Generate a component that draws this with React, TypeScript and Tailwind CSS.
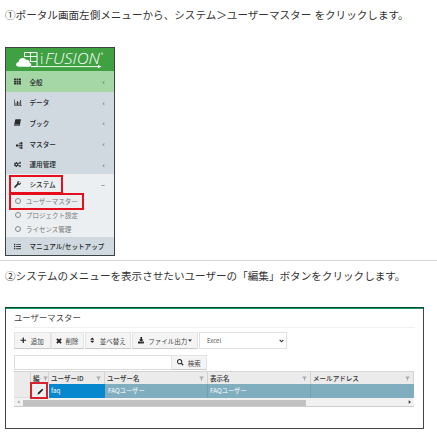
import type { ReactNode } from "react";
import {
  FaCogs,
  FaDownload,
  FaList,
  FaPlus,
  FaSearch,
  FaSort,
  FaTh,
  FaWrench,
} from "react-icons/fa";

function Logo() {
  return (
    <div className="relative h-[23px] shrink-0 bg-[#3fa142] text-white">
      <svg className="absolute inset-0" width="108" height="23" viewBox="0 0 108 23" fill="none">
        <path d="M18.5 9V4.5H31V18.5H25" stroke="white" strokeWidth="1" />
        <path d="M19 8.5H31M24.5 5V13M23.5 13.5H31" stroke="white" strokeWidth="0.9" />
        <path
          d="M13 18.8C9.2 18.8 9.4 14.5 12.6 14C12.8 9.8 18.4 8.6 20 12C22.6 11.2 23.8 13 23.4 14.8C26.1 15.3 25.8 18.8 23.4 18.8Z"
          fill="white"
        />
        <path d="M25 18.6H93" stroke="white" strokeWidth="0.9" />
        <path d="M92 16.9L95.6 18.6L92 20.3Z" fill="white" />
      </svg>
      <span className="absolute left-[34px] top-[2px] font-['Open_Sans',sans-serif] text-[15px] font-light leading-[17px]">i</span>
      <span className="absolute left-[39px] top-[2px] origin-left scale-x-[1.1] font-['Open_Sans',sans-serif] text-[15px] font-light italic leading-[17px]">
        FUSION
      </span>
      <span className="absolute left-[95px] top-[4px] text-[4px] leading-[5px]">®</span>
    </div>
  );
}

function ChartIcon() {
  return (
    <svg width="8" height="7" viewBox="0 0 8 7" fill="none" stroke="#333">
      <path d="M0.5 0.5V6.5H8" strokeWidth="0.6" />
      <path d="M2 3.5V6M3.5 2V6M5 3V6M6.6 1V6" strokeWidth="0.9" />
    </svg>
  );
}

function BookIcon() {
  return (
    <svg width="7" height="7" viewBox="0 0 7 7">
      <path d="M1.8 0.2H6.9L5.8 6.8H0.8C0.2 6.8 0 6.4 0.2 5.8L1.2 0.7Z" fill="#2b2b2b" />
      <path d="M1 5.8H5.3" stroke="#cfd8de" strokeWidth="0.5" />
    </svg>
  );
}

function TreeIcon() {
  return (
    <svg className="ml-[2px] mt-[3px]" width="7" height="7" viewBox="0 0 7 7">
      <path d="M1 3.5H5M3.2 1.2V5.9M3.2 1.2H5M3.2 5.9H5" stroke="#333" strokeWidth="0.6" fill="none" />
      <path d="M0 2.6H2V4.4H0ZM4.5 0.2H6.4V2H4.5ZM4.5 2.6H6.4V4.4H4.5ZM4.5 5H6.4V6.8H4.5Z" fill="#222" />
    </svg>
  );
}

function PencilIcon() {
  return (
    <svg width="7" height="7" viewBox="0 0 7 7">
      <path d="M0.5 6.5L1 4.8L5.2 0.7L6.3 1.8L2.2 6Z" fill="#111" />
    </svg>
  );
}

function CrossIcon() {
  return (
    <svg width="6" height="6" viewBox="0 0 6 6">
      <path d="M0.9 0.9L5.1 5.1M5.1 0.9L0.9 5.1" stroke="#222" strokeWidth="1.8" />
    </svg>
  );
}

function MenuRow({ icon, label, tone, mark = "‹" }: { icon: ReactNode; label: string; tone: string; mark?: string }) {
  return (
    <div className={`flex shrink-0 items-center pl-[8px] pr-[9px] ${tone}`}>
      <span className="flex w-[15.5px] shrink-0 text-[7px] text-[#333]">{icon}</span>
      <span className="grow whitespace-nowrap text-[6.6px] font-medium leading-[10px] text-[#202528]">{label}</span>
      <span className="text-[8px] leading-[9px] text-[#56636a]">{mark}</span>
    </div>
  );
}

function SubItem({ label }: { label: string }) {
  return (
    <div className="flex h-[14px] items-center pl-[9px]">
      <span className="mr-[5px] size-[6px] rounded-full border border-[#888]" />
      <span className="text-[6.5px] leading-[10px] text-[#777]">{label}</span>
    </div>
  );
}

function Sidebar() {
  return (
    <div className="relative ml-[5px] flex h-[209px] w-[110px] flex-col border border-[#3d4244] bg-[#d0d9df]">
      <Logo />
      <MenuRow icon={<FaTh />} label="全般" tone="h-[21px] bg-[#a5d6a5]" />
      <MenuRow icon={<ChartIcon />} label="データ" tone="h-[20px]" />
      <MenuRow icon={<BookIcon />} label="ブック" tone="h-[21px]" />
      <MenuRow icon={<TreeIcon />} label="マスター" tone="h-[21px]" />
      <MenuRow icon={<FaCogs />} label="運用管理" tone="h-[20px]" />
      <div className="h-[63px] shrink-0 bg-[#eceff1]">
        <MenuRow icon={<FaWrench />} label="システム" tone="h-[20px]" mark="–" />
        <SubItem label="ユーザーマスター" />
        <SubItem label="プロジェクト設定" />
        <SubItem label="ライセンス管理" />
      </div>
      <MenuRow icon={<FaList />} label="マニュアル/セットアップ" tone="h-[18px]" mark="" />
      <div className="absolute left-[3px] top-[127px] h-[19px] w-[54px] border-2 border-[#e60f1e]" />
      <div className="absolute left-[3px] top-[145px] h-[17px] w-[75px] border-2 border-[#e60f1e]" />
    </div>
  );
}

function ToolButton({ icon, label, size }: { icon: ReactNode; label: ReactNode; size: string }) {
  return (
    <div
      className={`flex shrink-0 items-center justify-center whitespace-nowrap border border-[#e4e4e4] border-b-[#c9c9c9] bg-[#f4f4f4] text-[6.5px] leading-[10px] text-[#444] ${size}`}
    >
      <span className="mr-[4px] text-[6.5px] text-[#222]">{icon}</span>
      {label}
    </div>
  );
}

function Filter() {
  return (
    <svg className="shrink-0" width="5" height="5" viewBox="0 0 5 5">
      <path d="M0.2 0.5H4.8L3 3V5L2 4.2V3Z" fill="#aaa" />
    </svg>
  );
}

function HeadCell({ label }: { label: string }) {
  return (
    <div className="flex items-center justify-between border-r border-[#d2d2d2] pl-[2px] pr-[3px]">
      <span>{label}</span>
      <Filter />
    </div>
  );
}

function UserTable() {
  const columns = "grid grid-cols-[17px_18px_56px_103px_103px_103px]";
  return (
    <div className="h-[36px] w-[400px] whitespace-nowrap border-b border-[#ccc]">
      <div className={`${columns} h-[13px] border-t border-[#d5d5d5] bg-[#ebebeb] text-[6.55px] font-medium leading-[12px] text-[#333]`}>
        <div className="border-r border-[#d2d2d2]" />
        <div className="flex items-center border-r border-[#d2d2d2] pl-[2px]">
          <span>編</span>
          <span className="mr-px w-[3px] font-['Liberation_Sans',sans-serif] text-[4px] leading-[6px]">..</span>
          <Filter />
        </div>
        <HeadCell label="ユーザーID" />
        <HeadCell label="ユーザー名" />
        <HeadCell label="表示名" />
        <HeadCell label="メールアドレス" />
      </div>
      <div className={`${columns} h-[14px] bg-[#80aebf] text-[6.3px] leading-[13px] text-white`}>
        <div className="border-b border-r border-[#ddd] bg-[#ebebeb]" />
        <div className="relative flex items-center justify-center bg-[#eee]">
          <PencilIcon />
          <div className="absolute -left-px -top-[2px] h-[17px] w-[18px] border-2 border-[#d9202e]" />
        </div>
        <div className="bg-[#0787cd] pl-[2px]">faq</div>
        <div className="border-r border-[#749fae] pl-[3px]">FAQユーザー</div>
        <div className="border-r border-[#749fae] pl-[2px]">FAQユーザー</div>
        <div />
      </div>
      <div className="flex h-[8px] items-center bg-[#f1f1f1]">
        <svg className="shrink-0" width="9" height="8" viewBox="0 0 9 8">
          <path d="M5.5 2.5V5.5L3.5 4Z" fill="#999" />
        </svg>
        <div className="mt-px h-[6px] w-[283px] bg-[#c1c1c1]" />
        <div className="grow" />
        <svg className="shrink-0" width="9" height="8" viewBox="0 0 9 8">
          <path d="M3.7 2.2V5.8L6 4Z" fill="#333" />
        </svg>
      </div>
    </div>
  );
}

function UserPanel() {
  return (
    <div className="ml-[5px] h-[122px] w-[419px] border border-t-0 border-[#444]">
      <div className="-mx-px h-px bg-[#07482d]" />
      <div className="h-px bg-[#109a62]" />
      <div className="mx-[8px] h-[19px] border-b border-[#f0f0f0] text-[8.4px] leading-[17px] text-[#444]">ユーザーマスター</div>
      <div className="ml-[8px] mt-[4px] flex h-[17px]">
        <ToolButton icon={<FaPlus />} label="追加" size="w-[37px] pr-px" />
        <ToolButton icon={<CrossIcon />} label="削除" size="w-[33px] pr-px" />
        <ToolButton icon={<FaSort />} label="並べ替え" size="ml-px w-[46px] pr-px" />
        <ToolButton
          icon={<FaDownload />}
          label={
            <>
              ファイル出力
              <svg className="ml-px" width="4" height="3" viewBox="0 0 4 3">
                <path d="M0 0.5H4L2 2.7Z" fill="#333" />
              </svg>
            </>
          }
          size="ml-px w-[66px]"
        />
        <div className="ml-[1px] flex w-[88px] items-center justify-between border border-[#e0e0e0] pl-[7px] pr-[2px] text-[6px] leading-[8px] text-[#555]">
          Excel
          <svg width="5" height="4" viewBox="0 0 5 4" fill="none">
            <path d="M0.7 0.8L2.5 2.8L4.3 0.8" stroke="#333" strokeWidth="1.1" />
          </svg>
        </div>
      </div>
      <div className="ml-[8px] mt-[6px] flex h-[15px]">
        <div className="w-[157px] border border-r-0 border-[#ddd]" />
        <ToolButton icon={<FaSearch />} label="検索" size="w-[36px]" />
      </div>
      <div className="ml-[8px] mt-px">
        <UserTable />
      </div>
    </div>
  );
}

export default function App() {
  return (
    <main className="h-[433px] w-[437px] overflow-hidden bg-white font-['Noto_Sans_CJK_JP',sans-serif]">
      <p className="h-[47px] whitespace-nowrap pl-[5px] pt-[7px] text-[10.58px] leading-[16px] text-[#333] [word-spacing:0.8px]">
        ①ポータル画面左側メニューから、システム＞ユーザーマスター をクリックします。
      </p>
      <Sidebar />
      <hr className="mt-[4px] border-[#d8d8d8]" />
      <p className="h-[46px] whitespace-nowrap pl-[5px] pt-[7px] text-[10.58px] leading-[16px] text-[#333]">
        ②システムのメニューを表示させたいユーザーの「編集」ボタンをクリックします。
      </p>
      <UserPanel />
    </main>
  );
}
